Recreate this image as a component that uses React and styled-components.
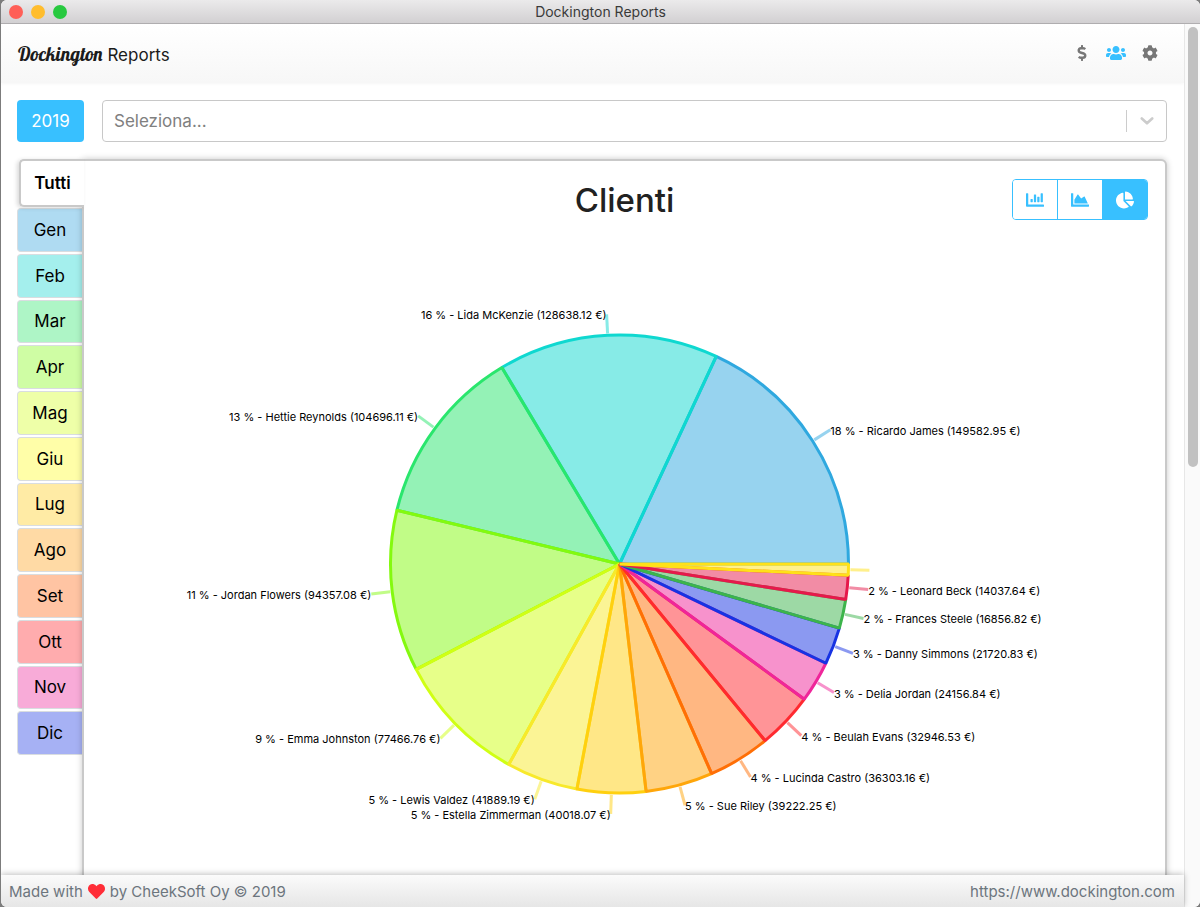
import React from 'react';
import styled, { createGlobalStyle, css } from 'styled-components';
import {
  FaDollarSign, FaUsers, FaCog, FaChartBar, FaChartArea, FaChartPie, FaHeart,
} from 'react-icons/fa';

const ACCENT = '#38c0ff';
const LINE = '#c9c9c9';

const GlobalStyle = createGlobalStyle`
  *, *::before, *::after { box-sizing: border-box; }
  body {
    margin: 0;
    background: #7c7c7c;
    color: #212529;
    font-family: Inter, 'Liberation Sans', sans-serif;
    font-size: 16px;
  }
  button, select { font-family: inherit; }
`;

const Window = styled.div`
  display: flex;
  flex-direction: column;
  height: 100vh;
  margin-left: 1px;
  overflow: hidden;
  background: #fff;
  border-radius: 6px;
`;

const TitleBar = styled.div`
  flex: none;
  display: grid;
  grid-template-columns: 1fr auto 1fr;
  align-items: center;
  height: 24px;
  padding: 0 8px;
  background: linear-gradient(#ebeaeb, #d2d0d2);
  border-bottom: 1px solid #b0aeb0;
  font-size: 14px;
  color: #3a3a3a;
`;

const Lights = styled.div`
  display: flex;
  gap: 8px;
`;

const Light = styled.span`
  width: 14px;
  height: 14px;
  border-radius: 50%;
  background: ${(p) => p.$color};
`;

const Viewport = styled.div`
  flex: 1;
  min-height: 0;
  display: flex;
`;

const Page = styled.div`
  flex: 1;
  min-width: 0;
  display: flex;
  flex-direction: column;
`;

const Track = styled.div`
  flex: none;
  width: 16px;
  padding: 3px 2px 0 3px;
  background: #fafafa;
  border-left: 1px solid #e7e7e7;
`;

const Thumb = styled.div`
  width: 10px;
  height: 50%;
  border-radius: 5px;
  background: #c1c1c1;
`;

const Header = styled.header`
  flex: none;
  display: flex;
  align-items: center;
  justify-content: space-between;
  height: 59px;
  padding: 0 26px 0 17px;
  background: linear-gradient(#fff, #f7f7f7);
  box-shadow: 0 1px 3px rgba(0, 0, 0, 0.04);
`;

const Brand = styled.a`
  display: flex;
  align-items: baseline;
  gap: 5px;
  padding-top: 1px;
  font-size: 17px;
  color: #1b1b1b;
  text-decoration: none;
`;

const BrandScript = styled.span`
  font-family: Lobster, 'Liberation Serif', serif;
  font-size: 19px;
`;

const Nav = styled.nav`
  display: flex;
  align-items: center;
  gap: 16px;
  padding-bottom: 2px;
`;

const NavLink = styled.a`
  display: flex;
  font-size: ${(p) => (p.$wide ? '20px' : '16px')};
  color: ${(p) => (p.$active ? ACCENT : '#777')};
`;

const Content = styled.main`
  flex: 1;
  min-height: 0;
  overflow: hidden;
  padding: 17px 17px 0 16px;
`;

const Filters = styled.div`
  display: flex;
  gap: 18px;
  height: 42px;
  margin-bottom: 17px;
`;

const YearButton = styled.button`
  width: 67px;
  border: 0;
  border-radius: 4px;
  background: ${ACCENT};
  color: #fff;
  font-size: 17px;
`;

const SelectBox = styled.div`
  flex: 1;
  display: flex;
  position: relative;
`;

const Select = styled.select`
  flex: 1;
  appearance: none;
  padding: 0 52px 0 11px;
  border: 1px solid #c8c8c8;
  border-radius: 4px;
  background: #fff;
  color: #808080;
  font-size: 17px;
`;

const Indicator = styled.span`
  position: absolute;
  top: 10px;
  right: 0;
  bottom: 10px;
  width: 41px;
  display: flex;
  align-items: center;
  justify-content: center;
  border-left: 1px solid #ccc;
  pointer-events: none;
`;

const Report = styled.div`
  display: flex;
  align-items: flex-start;
`;

const Tabs = styled.div`
  flex: none;
  width: 65px;
`;

const tabBase = css`
  display: block;
  width: 100%;
  padding: 0;
  color: #000;
  font-size: 17px;
  text-align: center;
`;

const AllTab = styled.button`
  ${tabBase}
  position: relative;
  z-index: 2;
  width: 65px;
  height: 48px;
  margin-left: 2px;
  border: 2px solid ${LINE};
  border-right: 0;
  border-radius: 5px 0 0 5px;
  background: #fff;
  box-shadow: -2px 1px 4px rgba(0, 0, 0, 0.15);
  font-weight: 600;
`;

const Months = styled.div`
  display: grid;
  grid-template-rows: repeat(12, 1fr);
  gap: 2px;
  height: 547px;
  margin-top: 1px;
`;

const MonthTab = styled.button`
  ${tabBase}
  border: 1px solid #d9dde0;
  border-right: 0;
  border-radius: 4px 0 0 4px;
  background: ${(p) => p.$color};
`;

const Panel = styled.section`
  flex: 1;
  min-width: 0;
  min-height: 900px;
  position: relative;
  z-index: 1;
  border: 2px solid ${LINE};
  border-radius: 0 6px 0 0;
  background: #fff;
  box-shadow: 0 0 6px rgba(0, 0, 0, 0.22);
`;

const PanelHead = styled.div`
  display: grid;
  grid-template-columns: 1fr auto 1fr;
  padding: 18px 17px 0;
`;

const Title = styled.h1`
  grid-column: 2;
  margin: 0;
  font-size: 33px;
  font-weight: 500;
  line-height: 42px;
  color: #212121;
`;

const ChartTypes = styled.div`
  justify-self: end;
  display: flex;
  width: 136px;
  height: 41px;
  overflow: hidden;
  border: 1px solid ${ACCENT};
  border-radius: 4px;
`;

const ChartType = styled.button`
  flex: 1;
  display: flex;
  align-items: center;
  justify-content: center;
  padding: 0;
  border: 0;
  background: ${(p) => (p.$active ? ACCENT : '#fff')};
  color: ${(p) => (p.$active ? '#fff' : ACCENT)};
  font-size: 18px;

  & + & { border-left: 1px solid ${ACCENT}; }
`;

const Chart = styled.svg`
  display: block;
  width: 100%;
  height: 680px;
  font-size: 11px;
`;

const Footer = styled.footer`
  flex: none;
  position: relative;
  z-index: 3;
  display: flex;
  align-items: center;
  justify-content: space-between;
  height: 32px;
  padding: 0 9px 0 8px;
  background: linear-gradient(#fbfbfb, #e6e6e6);
  box-shadow: 0 -1px 6px rgba(0, 0, 0, 0.25);
  color: #6c757d;
  font-size: 15px;
`;

const Made = styled.span`
  display: flex;
  align-items: center;
  gap: 5px;
`;

const Heart = styled(FaHeart)`
  color: #ff2d37;
  font-size: 17px;
`;

const SiteLink = styled.a`
  color: inherit;
  text-decoration: none;
`;

const months = [
  ['Gen', '#afdbf2'], ['Feb', '#a4efed'], ['Mar', '#aef5c6'], ['Apr', '#cffda4'],
  ['Mag', '#eeffa8'], ['Giu', '#fffea8'], ['Lug', '#ffeba5'], ['Ago', '#ffdaa5'],
  ['Set', '#ffc4a3'], ['Ott', '#ffacae'], ['Nov', '#f8abd8'], ['Dic', '#a6b1f4'],
];

const customers = [
  { name: 'Ricardo James', value: 149582.95, color: '#2fa8df' },
  { name: 'Lida McKenzie', value: 128638.12, color: '#0fd8d0' },
  { name: 'Hettie Reynolds', value: 104696.11, color: '#2ae66d' },
  { name: 'Jordan Flowers', value: 94357.08, color: '#84f90f' },
  { name: 'Emma Johnston', value: 77466.76, color: '#d0ff14' },
  { name: 'Lewis Valdez', value: 41889.19, color: '#f8e92b' },
  { name: 'Estella Zimmerman', value: 40018.07, color: '#ffd00f' },
  { name: 'Sue Riley', value: 39222.25, color: '#ffa60a' },
  { name: 'Lucinda Castro', value: 36303.16, color: '#ff6f06' },
  { name: 'Beulah Evans', value: 32946.53, color: '#ff2a30' },
  { name: 'Delia Jordan', value: 24156.84, color: '#ef269a' },
  { name: 'Danny Simmons', value: 21720.83, color: '#1733e3' },
  { name: 'Frances Steele', value: 16856.82, color: '#3cb44b' },
  { name: 'Leonard Beck', value: 14037.64, color: '#e6194b' },
  { value: 6500, color: '#ffe119' },
];

const CX = 445;
const CY = 343;
const RADIUS = 229;

function point(angle, radius) {
  return [CX + Math.cos(angle) * radius, CY - Math.sin(angle) * radius];
}

function PieChart({ data }) {
  const total = data.reduce((sum, d) => sum + d.value, 0);
  let angle = 0;
  const slices = data.map((d) => {
    const start = angle;
    angle += (d.value / total) * Math.PI * 2;
    return { ...d, start, end: angle, mid: (start + angle) / 2 };
  });

  return (
    <Chart viewBox="0 0 900 680" role="img" aria-label="Clienti">
      {slices.map((s) => {
        const [x1, y1] = point(s.start, RADIUS);
        const [x2, y2] = point(s.end, RADIUS);
        return (
          <path
            key={s.color}
            d={`M${CX} ${CY}L${x1} ${y1}A${RADIUS} ${RADIUS} 0 0 0 ${x2} ${y2}Z`}
            fill={s.color}
            fillOpacity="0.5"
            stroke={s.color}
            strokeWidth="3"
            strokeLinejoin="bevel"
          />
        );
      })}
      {slices.map((s) => {
        const [x1, y1] = point(s.mid, RADIUS + 2);
        const [x2, y2] = point(s.mid, RADIUS + 21);
        return (
          <g key={s.color}>
            <line x1={x1} y1={y1} x2={x2} y2={y2} stroke={s.color} strokeOpacity="0.5" strokeWidth="3" />
            {s.name && (
              <text x={x2} y={y2 + 1} textAnchor={x2 > CX ? 'start' : 'end'} dominantBaseline="central" fill="#000">
                {`${Math.round((s.value / total) * 100)} % - ${s.name} (${s.value.toFixed(2)} €)`}
              </text>
            )}
          </g>
        );
      })}
    </Chart>
  );
}

export default function App() {
  return (
    <>
      <GlobalStyle />
      <Window>
        <TitleBar>
          <Lights>
            <Light $color="#ff5f57" />
            <Light $color="#ffbd2e" />
            <Light $color="#28c940" />
          </Lights>
          <span>Dockington Reports</span>
        </TitleBar>
        <Viewport>
          <Page>
            <Header>
              <Brand href="#">
                <BrandScript>Dockington</BrandScript>
                <span>Reports</span>
              </Brand>
              <Nav>
                <NavLink href="#sales" aria-label="Vendite"><FaDollarSign /></NavLink>
                <NavLink href="#customers" aria-label="Clienti" $wide $active><FaUsers /></NavLink>
                <NavLink href="#settings" aria-label="Impostazioni"><FaCog /></NavLink>
              </Nav>
            </Header>
            <Content>
              <Filters>
                <YearButton type="button">2019</YearButton>
                <SelectBox>
                  <Select aria-label="Seleziona" defaultValue="">
                    <option value="">Seleziona...</option>
                  </Select>
                  <Indicator>
                    <svg width="14" height="8" viewBox="0 0 14 8" fill="none" stroke="#ccc" strokeWidth="2.6" strokeLinecap="round" strokeLinejoin="round">
                      <path d="M1.8 1.5 7 6.3l5.2-4.8" />
                    </svg>
                  </Indicator>
                </SelectBox>
              </Filters>
              <Report>
                <Tabs>
                  <AllTab type="button">Tutti</AllTab>
                  <Months>
                    {months.map(([label, color]) => (
                      <MonthTab key={label} type="button" $color={color}>{label}</MonthTab>
                    ))}
                  </Months>
                </Tabs>
                <Panel>
                  <PanelHead>
                    <Title>Clienti</Title>
                    <ChartTypes>
                      <ChartType type="button" aria-label="Barre"><FaChartBar /></ChartType>
                      <ChartType type="button" aria-label="Area"><FaChartArea /></ChartType>
                      <ChartType type="button" aria-label="Torta" $active><FaChartPie /></ChartType>
                    </ChartTypes>
                  </PanelHead>
                  <PieChart data={customers} />
                </Panel>
              </Report>
            </Content>
            <Footer>
              <Made>Made with <Heart aria-label="love" /> by CheekSoft Oy © 2019</Made>
              <SiteLink href="https://www.dockington.com">https://www.dockington.com</SiteLink>
            </Footer>
          </Page>
          <Track><Thumb /></Track>
        </Viewport>
      </Window>
    </>
  );
}
